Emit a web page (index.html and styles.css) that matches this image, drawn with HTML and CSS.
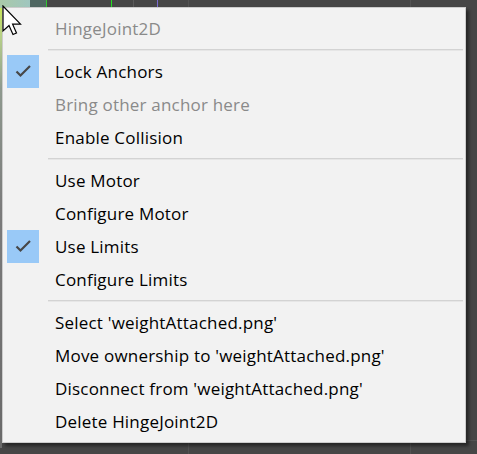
FILE: index.html
```html
<!DOCTYPE html>
<html>
<head>
<meta charset="utf-8">
<link rel="stylesheet" href="styles.css">
</head>
<body>
<div class="scene">
  <div class="scene-top">
    <div class="sky"></div>
    <div class="teal"></div>
  </div>
  <div class="vline v1"></div>
  <div class="vline v2"></div>
  <div class="vline v3"></div>
  <div class="vline v4"></div>
  <div class="vline v5"></div>
  <div class="vline v6"></div>
  <div class="hline h1"></div>
  <div class="leftstrip"></div>
</div>

<div class="menu">
  <div class="item header"><span class="label">HingeJoint2D</span></div>
  <div class="sep"></div>
  <div class="item checked"><span class="check"><svg width="32" height="33" viewBox="0 0 32 33"><path d="M9.5 16.5 L13.5 20.5 L23 11" fill="none" stroke="#474747" stroke-width="2.2"/></svg></span><span class="label">Lock Anchors</span></div>
  <div class="item disabled"><span class="label">Bring other anchor here</span></div>
  <div class="item"><span class="label">Enable Collision</span></div>
  <div class="sep"></div>
  <div class="item"><span class="label">Use Motor</span></div>
  <div class="item"><span class="label">Configure Motor</span></div>
  <div class="item checked"><span class="check"><svg width="32" height="33" viewBox="0 0 32 33"><path d="M9.5 16.5 L13.5 20.5 L23 11" fill="none" stroke="#474747" stroke-width="2.2"/></svg></span><span class="label">Use Limits</span></div>
  <div class="item"><span class="label">Configure Limits</span></div>
  <div class="sep"></div>
  <div class="item"><span class="label">Select 'weightAttached.png'</span></div>
  <div class="item"><span class="label">Move ownership to 'weightAttached.png'</span></div>
  <div class="item"><span class="label">Disconnect from 'weightAttached.png'</span></div>
  <div class="item"><span class="label">Delete HingeJoint2D</span></div>
</div>

<svg class="cursor" width="22" height="32" viewBox="0 0 22 32">
  <path d="M1 1 L1 26 L7 20.5 L11 29.5 L14.5 28 L10.6 19.2 L18.5 19.2 Z" fill="#ffffff" stroke="#000000" stroke-width="1.2" stroke-linejoin="miter"/>
</svg>
</body>
</html>
```

FILE: styles.css
```css
html, body {
  margin: 0;
  padding: 0;
}
body {
  width: 477px;
  height: 454px;
  background: #464646;
  overflow: hidden;
  position: relative;
  font-family: "Open Sans", "Noto Sans", "DejaVu Sans", sans-serif;
}
.scene {
  position: absolute;
  inset: 0;
}
.scene-top {
  position: absolute;
  left: 0;
  top: 0;
  width: 477px;
  height: 8px;
  display: flex;
}
.sky {
  width: 30px;
  height: 8px;
  background: linear-gradient(90deg, #a9c9a8, #9fc6bf);
}
.teal {
  width: 16px;
  height: 8px;
  background: #4f6661;
}
.vline {
  position: absolute;
  top: 0;
  width: 1px;
  height: 454px;
  background: #525252;
}
.v1 { left: 46px; background: #31c531; height: 8px; }
.v2 { left: 111px; background: #22dd22; height: 8px; }
.v3 { left: 133px; height: 8px; background: #5a5a5a; }
.v4 { left: 157px; height: 8px; background: #7a6ad0; }
.v5 { left: 188px; }
.v6 { left: 410px; }
.hline {
  position: absolute;
  left: 0;
  width: 477px;
  height: 1px;
  background: #545454;
}
.h1 { top: 440px; }
.leftstrip {
  position: absolute;
  left: 0;
  top: 8px;
  width: 2px;
  height: 440px;
  background: linear-gradient(180deg, #c9e65a 0px, #b6cf8a 30px, #8f9a8f 80px, #7c7c7c 200px, #6a6a6a 440px);
}

.menu {
  position: absolute;
  left: 2px;
  top: 7px;
  width: 462px;
  padding: 4px 0 4px 0;
  background: #f2f2f2;
  border: 1px solid #cccccc;
  box-shadow: 3px 3px 3px rgba(0, 0, 0, 0.45);
  display: flex;
  flex-direction: column;
}
.item {
  height: 33px;
  display: flex;
  align-items: center;
  position: relative;
  font-size: 17px;
  letter-spacing: 0.2px;
  color: #000000;
}
.label {
  margin-left: 52px;
  white-space: nowrap;
}
.header .label,
.disabled .label {
  color: #8a8a8a;
}
.check {
  position: absolute;
  left: 4px;
  top: 0;
  width: 32px;
  height: 33px;
  background: #99c9f7;
}
.check svg {
  display: block;
}
.sep {
  height: 1px;
  margin: 4px 2px 4px 45px;
  background: #d3d3d3;
  border-bottom: 1px solid #e6e6e6;
}
.cursor {
  position: absolute;
  left: 2px;
  top: 5px;
}
```
